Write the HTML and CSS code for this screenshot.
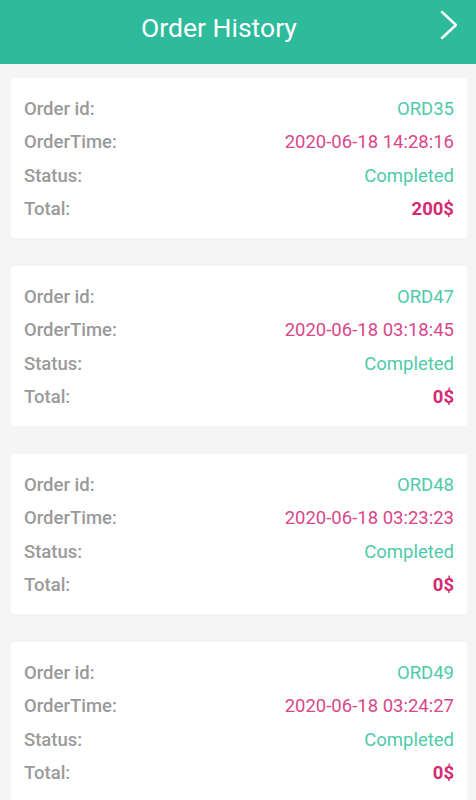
FILE: index.html
```html
<!DOCTYPE html>
<html>
<head>
<meta charset="utf-8">
<link rel="stylesheet" href="styles.css">
</head>
<body>
<header class="bar">
  <h1 class="title">Order History</h1>
  <svg class="chev" width="20" height="30" viewBox="0 0 20 30"><path d="M3 2 L17 15 L3 28" fill="none" stroke="#fff" stroke-width="2.4" stroke-linecap="round" stroke-linejoin="round"/></svg>
</header>
<main class="list">
  <section class="card">
    <div class="row"><span class="label">Order id:</span><span class="v-id">ORD35</span></div>
    <div class="row"><span class="label">OrderTime:</span><span class="v-time">2020-06-18 14:28:16</span></div>
    <div class="row"><span class="label">Status:</span><span class="v-status">Completed</span></div>
    <div class="row"><span class="label">Total:</span><span class="v-total">200$</span></div>
  </section>
  <section class="card">
    <div class="row"><span class="label">Order id:</span><span class="v-id">ORD47</span></div>
    <div class="row"><span class="label">OrderTime:</span><span class="v-time">2020-06-18 03:18:45</span></div>
    <div class="row"><span class="label">Status:</span><span class="v-status">Completed</span></div>
    <div class="row"><span class="label">Total:</span><span class="v-total">0$</span></div>
  </section>
  <section class="card">
    <div class="row"><span class="label">Order id:</span><span class="v-id">ORD48</span></div>
    <div class="row"><span class="label">OrderTime:</span><span class="v-time">2020-06-18 03:23:23</span></div>
    <div class="row"><span class="label">Status:</span><span class="v-status">Completed</span></div>
    <div class="row"><span class="label">Total:</span><span class="v-total">0$</span></div>
  </section>
  <section class="card">
    <div class="row"><span class="label">Order id:</span><span class="v-id">ORD49</span></div>
    <div class="row"><span class="label">OrderTime:</span><span class="v-time">2020-06-18 03:24:27</span></div>
    <div class="row"><span class="label">Status:</span><span class="v-status">Completed</span></div>
    <div class="row"><span class="label">Total:</span><span class="v-total">0$</span></div>
  </section>
</main>
</body>
</html>
```
FILE: styles.css
```css
* { box-sizing: border-box; }
html, body { margin: 0; padding: 0; }
body {
  background: #f5f5f5;
  font-family: Roboto, "Liberation Sans", sans-serif;
  width: 476px;
  height: 800px;
  overflow: hidden;
}
.bar {
  height: 64px;
  background: #2dbb9b;
  display: flex;
  align-items: center;
  justify-content: center;
  position: relative;
}
.title {
  margin: 0 0 10px 0;
  font-weight: 400;
  font-size: 26.5px;
  color: #fff;
  transform: translateX(-19px);
}
.chev {
  position: absolute;
  right: 17px;
  top: 10px;
}
.list {
  padding: 14px 9px 0 11px;
  display: flex;
  flex-direction: column;
  gap: 28px;
}
.card {
  background: #fff;
  border-radius: 3px;
  padding: 14px 13px 12px 13px;
  height: 160px;
}
.row {
  display: flex;
  justify-content: space-between;
  align-items: center;
  height: 33.5px;
  font-size: 18.5px;
}
.label { color: #9a9a9a; font-weight: 500; }
.v-id, .v-status { color: #4fcaa9; }
.v-time { color: #d9478a; }
.v-total { color: #d42a74; font-weight: 700; }
```
